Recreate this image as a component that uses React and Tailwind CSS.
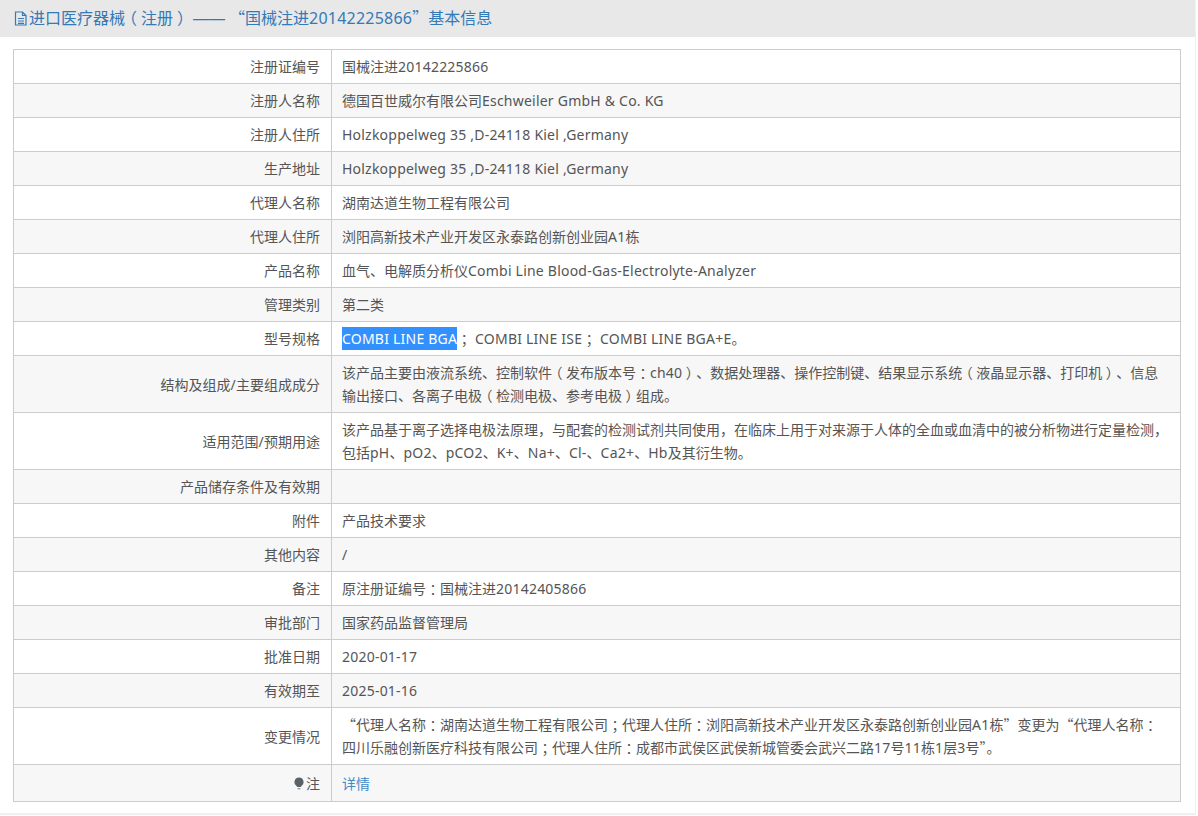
const segment = (text) =>
  text.split(/(\n|——|[A-Za-z0-9 ,.&+\/\-]+|[（）：；])/).filter(Boolean).map((part, i) => {
    if (part === "\n") return <br key={i} />;
    if (part === "——") {
      return <span key={i} className="font-['Liberation_Sans',sans-serif] mx-[4px]">{part}</span>;
    }
    if (/^[（）：；]$/.test(part)) {
      return <span key={i} className="[font-feature-settings:'halt'] px-[0.25em]">{part}</span>;
    }
    if (/^[A-Za-z0-9 ,.&+\/\-]+$/.test(part)) {
      return <span key={i} className="font-['Noto_Sans',sans-serif] tracking-[0.22px]">{part}</span>;
    }
    return <span key={i}>{part}</span>;
  });

const rows = [
  ["注册证编号", "国械注进20142225866"],
  ["注册人名称", "德国百世威尔有限公司Eschweiler GmbH & Co. KG"],
  ["注册人住所", "Holzkoppelweg 35 ,D-24118 Kiel ,Germany"],
  ["生产地址", "Holzkoppelweg 35 ,D-24118 Kiel ,Germany"],
  ["代理人名称", "湖南达道生物工程有限公司"],
  ["代理人住所", "浏阳高新技术产业开发区永泰路创新创业园A1栋"],
  ["产品名称", "血气、电解质分析仪Combi Line Blood-Gas-Electrolyte-Analyzer"],
  ["管理类别", "第二类"],
  ["型号规格", <><span className="bg-[#3390ff] text-white inline-block leading-[23px]">{segment("COMBI LINE BGA")}</span>{segment("； COMBI LINE ISE； COMBI LINE BGA+E。")}</>],
  ["结构及组成/主要组成成分", "该产品主要由液流系统、控制软件（发布版本号：ch40）、数据处理器、操作控制键、结果显示系统（液晶显示器、打印机）、信息\n输出接口、各离子电极（检测电极、参考电极）组成。"],
  ["适用范围/预期用途", "该产品基于离子选择电极法原理，与配套的检测试剂共同使用，在临床上用于对来源于人体的全血或血清中的被分析物进行定量检测，\n包括pH、pO2、pCO2、K+、Na+、Cl-、Ca2+、Hb及其衍生物。"],
  ["产品储存条件及有效期", ""],
  ["附件", "产品技术要求"],
  ["其他内容", "/"],
  ["备注", "原注册证编号：国械注进20142405866"],
  ["审批部门", "国家药品监督管理局"],
  ["批准日期", "2020-01-17"],
  ["有效期至", "2025-01-16"],
  ["变更情况", "“代理人名称：湖南达道生物工程有限公司；代理人住所：浏阳高新技术产业开发区永泰路创新创业园A1栋”变更为“代理人名称：\n四川乐融创新医疗科技有限公司；代理人住所：成都市武侯区武侯新城管委会武兴二路17号11栋1层3号”。"],
  [
    <>
      <svg className="inline-block align-[-1px]" width="10" height="13" viewBox="0 0 10 13">
        <path d="M5 0.5a4.5 4.5 0 0 1 2.6 8.2L6.8 10H3.2l-.8-1.3A4.5 4.5 0 0 1 5 0.5z" fill="#5a6268" />
        <rect x="3.6" y="11" width="2.8" height="1.4" fill="#999" />
      </svg>
      <span className="ml-[2px]">注</span>
    </>,
    <span className="text-[#428bca]">详情</span>,
  ],
];

export default function App() {
  return (
    <div className="w-[1198px] h-[816px] overflow-hidden bg-white text-[14px] text-[#555] font-['Noto_Sans_CJK_SC',sans-serif]">
      <div className="w-[1196px] h-[815px] border-r border-b-2 border-[#f0f0f0]">
        <h1 className="h-[37px] bg-[#e8e8e8] pl-[14px] pb-[2px] flex items-center text-[16px] font-normal text-[#337ab7]">
          <svg width="14" height="15" viewBox="0 0 14 15" fill="none" stroke="#337ab7" strokeWidth="1.2" className="mt-[1px]">
            <path d="M1.5 1h7l3.5 3.5V14H1.5z" />
            <path d="M8.5 1v3.5H12M4 7.5h6M4 10h6M4 12.3h6" />
          </svg>
          <span className="ml-[1px]">{segment("进口医疗器械（注册）——“国械注进20142225866”基本信息")}</span>
        </h1>
        <div className="pt-[12px] pl-[13px]">
          <table className="w-[1168px] table-fixed border-collapse border border-[#ccc]">
            <colgroup>
              <col className="w-[318px]" />
              <col />
            </colgroup>
            <tbody>
              {rows.map(([k, v], i) => (
                <tr key={i} className={i % 2 ? "bg-[#f7f7f7]" : "bg-white"}>
                  <td className={`border border-[#ccc] text-right pr-[11px] ${i === 19 ? "h-[37px]" : "h-[34px]"}`}>
                    {typeof k === "string" ? segment(k) : k}
                  </td>
                  <td className="border border-[#ccc] pl-[10px] pr-[10px] py-[5px] leading-[23px]">
                    {typeof v === "string" ? segment(v) : v}
                  </td>
                </tr>
              ))}
            </tbody>
          </table>
        </div>
      </div>
    </div>
  );
}
